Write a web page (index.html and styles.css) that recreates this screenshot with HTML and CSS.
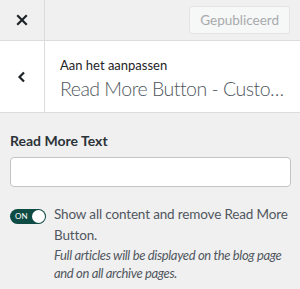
FILE: index.html
```html
<!DOCTYPE html>
<html>
<head>
<meta charset="utf-8">
<link rel="stylesheet" href="styles.css">
</head>
<body>
<div class="panel">
  <div class="topbar">
    <div class="close">
      <svg width="12" height="12" viewBox="0 0 12 12"><path d="M2 2 L10 10 M10 2 L2 10" stroke="#1d2327" stroke-width="2.2" stroke-linecap="square"/></svg>
    </div>
    <div class="spacer"></div>
    <div class="publish">Gepubliceerd</div>
  </div>
  <div class="header">
    <div class="back">
      <svg width="10" height="12" viewBox="0 0 10 12"><path d="M7 1.5 L2.5 6 L7 10.5" fill="none" stroke="#1d2327" stroke-width="2.2"/></svg>
    </div>
    <div class="titles">
      <span class="small">Aan het aanpassen</span>
      <div class="title">Read More Button - Customizer Settings</div>
    </div>
  </div>
  <div class="section">
    <label class="label">Read More Text</label>
    <input class="input" type="text">
    <div class="toggle-row">
      <div class="toggle"><span class="on">ON</span><span class="knob"></span></div>
      <div class="toggle-text">
        <div class="main">Show all content and remove Read More Button.</div>
        <div class="desc">Full articles will be displayed on the blog page and on all archive pages.</div>
      </div>
    </div>
  </div>
</div>
</body>
</html>
```
FILE: styles.css
```css
* { box-sizing: border-box; }
html, body { margin: 0; padding: 0; }
body {
  font-family: "Lato", "Noto Sans", sans-serif;
  background: #f0f0f1;
  width: 300px;
  height: 289px;
  overflow: hidden;
  color: #3c434a;
}
.topbar {
  display: flex;
  align-items: center;
  height: 41px;
  background: #f0f0f1;
  border-bottom: 1px solid #dcdcde;
}
.close {
  width: 45px;
  height: 40px;
  border-right: 1px solid #dcdcde;
  display: flex;
  align-items: center;
  justify-content: center;
}
.spacer { flex: 1; }
.publish {
  margin-right: 10px;
  height: 28px;
  padding: 0 10px;
  border: 1px solid #e4e4e6;
  border-radius: 3px;
  background: #f6f7f7;
  color: #a7aaad;
  font-size: 13.5px;
  line-height: 26px;
}
.header {
  display: flex;
  height: 72px;
  background: #fff;
  border-bottom: 1px solid #dcdcde;
}
.back {
  width: 45px;
  flex: none;
  border-right: 1px solid #dcdcde;
  display: flex;
  align-items: center;
  justify-content: center;
}
.titles {
  min-width: 0;
  flex: 1;
  padding: 14px 10px 0 15px;
}
.small {
  display: block;
  font-size: 13px;
  line-height: 20px;
  color: #1d2327;
}
.title {
  font-size: 19.5px;
  font-weight: 300;
  letter-spacing: -0.5px;
  line-height: 28px;
  color: #50575e;
  white-space: nowrap;
  overflow: hidden;
  text-overflow: ellipsis;
}
.section {
  padding: 17px 8px 0 10px;
}
.label {
  display: block;
  font-size: 14px;
  font-weight: 700;
  line-height: 22px;
  color: #2c3338;
}
.input {
  display: block;
  width: calc(100% - 1px);
  height: 30px;
  margin-top: 5px;
  border: 1px solid #c3c4c7;
  border-radius: 4px;
  background: #fff;
}
.toggle-row {
  display: flex;
  gap: 8px;
  margin-top: 17px;
}
.toggle {
  position: relative;
  flex: none;
  width: 36px;
  height: 15px;
  margin-top: 5px;
  border-radius: 8px;
  background: #0f4b45;
}
.on {
  position: absolute;
  left: 5px;
  top: 2px;
  font-size: 8px;
  line-height: 11px;
  color: #fff;
}
.knob {
  position: absolute;
  right: 1px;
  top: 1px;
  width: 13px;
  height: 13px;
  border-radius: 50%;
  background: #fff;
}
.toggle-text {
  font-size: 13.5px;
  letter-spacing: -0.15px;
  color: #50575e;
}
.main { line-height: 21px; }
.desc { font-style: italic; font-size: 13px; line-height: 18px; letter-spacing: -0.35px; }
```
